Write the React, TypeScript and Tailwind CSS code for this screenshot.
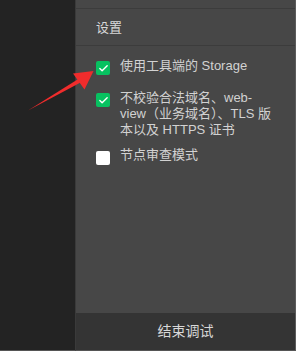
import { Check } from 'lucide-react';

const font = "font-['Liberation_Sans','Noto_Sans_CJK_SC',sans-serif]";

function Box({ checked }: { checked: boolean }) {
  if (!checked) {
    return <span className="mt-[4px] w-[14px] h-[14px] shrink-0 rounded-[2px] bg-white" />;
  }
  return (
    <span className="mt-[3px] w-[14px] h-[14px] shrink-0 rounded-[2px] bg-[#07c160] flex items-center justify-center">
      <Check className="w-[11px] h-[11px] text-white" strokeWidth={3} />
    </span>
  );
}

const items = [
  { checked: true, lines: ['使用工具端的 Storage'], mt: 'mt-[12px]' },
  { checked: true, lines: ['不校验合法域名、web-', 'view（业务域名）、TLS 版', '本以及 HTTPS 证书'], mt: 'mt-[15px]' },
  { checked: false, lines: ['节点审查模式'], mt: 'mt-[9px]' },
];

export default function App() {
  return (
    <div className={`relative w-[296px] h-[351px] flex bg-[#232323] overflow-hidden ${font}`}>
      <aside className="w-[75px] shrink-0 bg-[#232323] border-b border-[#555]" />

      <main className="flex-1 flex flex-col bg-[#474747] border-l border-r border-b border-l-[#3a3a3a] border-r-[#5c5c5c] border-b-[#555]">
        <div className="h-[9px] border-b border-[#3c3c3c]" />
        <div className="h-[37px] border-b border-[#3c3c3c] flex items-center pl-[20px] pt-[2px] text-[13px] text-[#d8d8d8]">
          设置
        </div>

        <div className="flex-1 flex flex-col pl-[20px] pr-[14px]">
          {items.map((it, i) => (
            <label key={i} className={`flex items-start gap-[10px] ${it.mt}`}>
              <Box checked={it.checked} />
              <span className="text-[13px] leading-[16px] text-[#d2d2d2]">
                {it.lines.map((l, j) => (
                  <span key={j} className="block whitespace-nowrap">{l}</span>
                ))}
              </span>
            </label>
          ))}
        </div>

        <button className="h-[37px] bg-[#343434] text-[14px] text-[#d8d8d8] flex items-center justify-center">
          结束调试
        </button>
      </main>

      {/* 标注箭头 */}
      <svg className="absolute inset-0 pointer-events-none" width="296" height="351" viewBox="0 0 296 351">
        <polygon points="28,110.5 77.9,79.2 80.1,82.8" fill="#f02c2c" />
        <polygon points="93.5,71 73,73.5 84.5,89.5" fill="#f02c2c" />
      </svg>
    </div>
  );
}
